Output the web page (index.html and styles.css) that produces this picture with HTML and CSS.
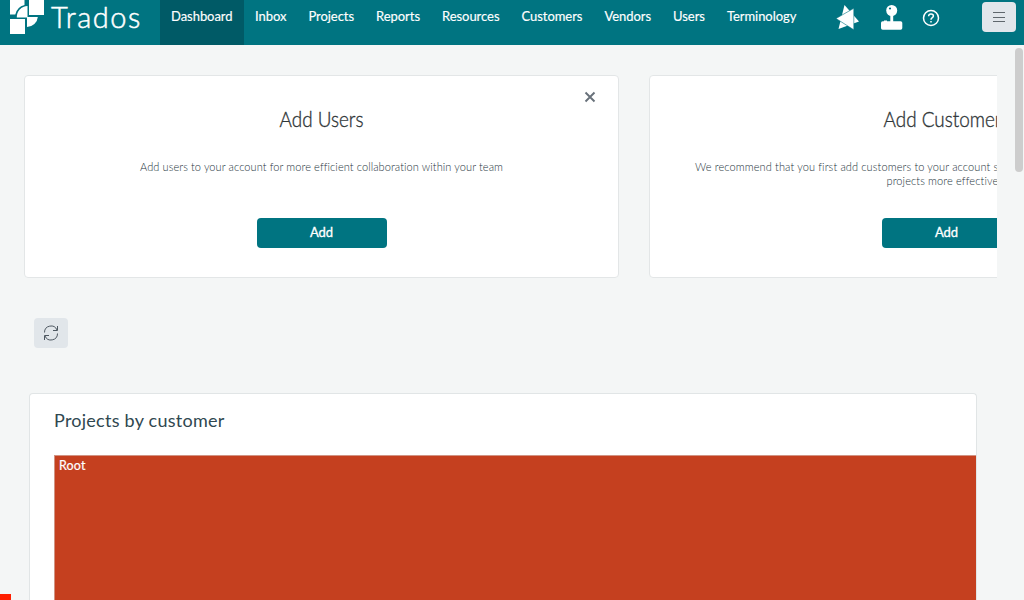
FILE: index.html
```html
<!DOCTYPE html>
<html lang="en">
<head>
<meta charset="utf-8">
<title>Trados</title>
<link rel="stylesheet" href="styles.css">
</head>
<body>
<header class="topbar">
  <div class="brand">
    <svg class="brand-mark" width="34" height="34" viewBox="0 0 34 34" fill="#fff">
      <path d="M0 0H14.500V5A12.500 12.500 0 0 0 5.300 14.500H0Z"/>
      <path d="M19 0H34V15H19Z"/>
      <path d="M17.500 6V17.500H6.800A11 11 0 0 1 17.500 6Z"/>
      <path d="M17 17H27.800A10.800 10.800 0 0 1 17 27Z"/>
      <path d="M0 19H15V34H0Z"/>
    </svg>
    <span class="brand-name">Trados</span>
  </div>
  <nav class="nav">
    <a class="nav-item active">Dashboard</a>
    <a class="nav-item">Inbox</a>
    <a class="nav-item">Projects</a>
    <a class="nav-item">Reports</a>
    <a class="nav-item">Resources</a>
    <a class="nav-item">Customers</a>
    <a class="nav-item">Vendors</a>
    <a class="nav-item">Users</a>
    <a class="nav-item">Terminology</a>
  </nav>
  <div class="tools">
    <svg width="24" height="26" viewBox="0 0 24 26" fill="#fff">
      <path d="M8.500 0L23 16.500L2.500 24Z"/>
      <path d="M0 13.500L17.800 3.300V24.800Z" stroke="#007481" stroke-width="0.600"/>
    </svg>
    <svg class="joystick" width="22" height="25" viewBox="0 0 22 25" fill="#fff">
      <circle cx="10.700" cy="5.500" r="5.500"/><circle cx="9" cy="3.500" r="1.100" fill="#007481"/>
      <path d="M9.300 10H12.200V17H9.300Z"/><path d="M3 15.500H6V17H3Z"/>
      <rect y="16.300" width="21.300" height="8.500" rx="1.700"/>
    </svg>
    <svg class="help" width="18" height="18" viewBox="0 0 18 18" fill="none" stroke="#fff" stroke-width="1.500">
      <circle cx="9" cy="9" r="7.500"/>
      <path d="M6.600 7.300Q6.700 5.100 9 5.100Q11.400 5.100 11.400 7Q11.400 8 10.100 8.800Q9 9.500 9 10.800"/>
      <path d="M9 12V13.500"/>
    </svg>
    <button class="menu" aria-label="Menu">
      <svg width="14" height="12" viewBox="0 0 14 12" stroke="#5f676d"><path d="M1 1.500H13M1 6.500H13M1 10.500H13"/></svg>
    </button>
  </div>
</header>
<main class="content">
  <section class="cards">
    <article class="card">
      <svg class="close" width="12" height="12" viewBox="0 0 12 12" stroke="#68717a" stroke-width="1.900"><path d="M1.500 1.500L10.500 10.500M10.500 1.500L1.500 10.500"/></svg>
      <h2 class="card-title">Add Users</h2>
      <p class="card-text">Add users to your account for more efficient collaboration within your team</p>
      <button class="add">Add</button>
    </article>
    <article class="card">
      <h2 class="card-title">Add Customers</h2>
      <p class="card-text">We recommend that you first add customers to your account so that you can organize and manage your<br>projects more effectively</p>
      <button class="add">Add</button>
    </article>
  </section>
  <button class="refresh" aria-label="Refresh">
    <svg width="16" height="16" viewBox="0 0 16 16" fill="none" stroke="#4e5861" stroke-width="1">
      <path d="M1.500 7.500A6.500 6.500 0 0 1 14 5M14.500 1V5.500H10M14.500 8.500A6.500 6.500 0 0 1 2 11M1.500 15V10.500H6"/>
    </svg>
  </button>
  <section class="panel">
    <h3 class="panel-title">Projects by customer</h3>
    <div class="treemap">Root</div>
  </section>
</main>
<div class="scroll-thumb"></div>
<div class="marker"></div>
</body>
</html>
```
FILE: styles.css
```css
* { box-sizing: border-box; }
html { height: 600px; overflow: hidden; }
body {
  margin: 0;
  width: 1024px;
  height: 600px;
  overflow: hidden;
  position: relative;
  background: #f4f6f6;
  font-family: Lato, "Liberation Sans", sans-serif;
}
button { border: 0; padding: 0; font-family: inherit; }
svg { display: block; flex: none; }
.topbar { display: flex; height: 45px; background: #007481; color: #fff; }
.brand { width: 160px; padding-left: 10px; display: flex; }
.brand-name {
  margin-left: 7px;
  font: 300 29px/33px Lato, sans-serif;
  letter-spacing: 1.5px;
  -webkit-text-stroke: 0.5px #fff;
}
.nav { display: flex; }
.nav-item {
  padding: 0 11px;
  font-size: 13px;
  line-height: 33px;
  letter-spacing: -0.045px;
  white-space: nowrap;
  -webkit-text-stroke: 0.15px #fff;
}
.nav-item.active { width: 84px; background: #005a66; }
.tools { margin-left: auto; padding: 2px 8px 0 0; display: flex; align-items: flex-start; }
.tools > svg:first-child { margin-top: 3px; }
.joystick { margin: 3px 0 0 21px; }
.help { margin: 7px 0 0 19px; }
.menu {
  width: 34px;
  height: 30px;
  margin-left: 42px;
  border-radius: 4px;
  background: #e1e6eb;
  display: flex;
  align-items: center;
  justify-content: center;
}
.content { height: 555px; overflow: hidden; padding: 30px 27px 0 24px; }
.cards { display: flex; gap: 30px; overflow: hidden; }
.card {
  position: relative;
  flex: 0 0 595px;
  height: 203px;
  padding-top: 30px;
  border: 1px solid #e3e6e7;
  border-radius: 4px;
  background: #fff;
  text-align: center;
}
.close { position: absolute; right: 22px; top: 15px; }
.card-title {
  margin: 0;
  font-size: 21px;
  line-height: 26px;
  font-weight: 300;
  color: #303638;
  transform: scaleX(0.9);
  -webkit-text-stroke: 0.35px #303638;
}
.card-text {
  height: 56px;
  margin: 28px 0 0;
  font-size: 11px;
  line-height: 14px;
  font-weight: 300;
  letter-spacing: 0.09px;
  font-variant-ligatures: common-ligatures;
  color: #25333c;
  white-space: nowrap;
}
.card + .card .card-text { letter-spacing: 0.12px; }
.add {
  display: block;
  width: 130px;
  height: 30px;
  margin: 2px auto 0;
  padding-bottom: 2px;
  border-radius: 4px;
  background: #007481;
  color: #fff;
  font-size: 13px;
  -webkit-text-stroke: 0.3px #fff;
}
.refresh {
  width: 34px;
  height: 30px;
  margin: 40px 0 0 10px;
  border-radius: 4px;
  background: #e1e6ea;
  display: flex;
  align-items: center;
  justify-content: center;
}
.panel {
  width: 948px;
  height: 207px;
  margin: 45px 0 0 5px;
  padding: 14px 0 0 24px;
  border: 1px solid #e1e5e6;
  border-bottom: 0;
  border-radius: 4px 4px 0 0;
  background: #fff;
}
.panel-title { margin: 0; font-size: 18px; line-height: 24px; font-weight: 400; letter-spacing: 0.25px; color: #304850; }
.treemap {
  height: 145px;
  margin-top: 23px;
  padding: 2px 4px;
  border: solid #d19383;
  border-width: 1px 0 0 1px;
  background: #c5401f;
  color: #fff;
  font-size: 12.5px;
  line-height: 15px;
  letter-spacing: 0.15px;
  -webkit-text-stroke: 0.2px #fff;
}
.scroll-thumb { position: absolute; left: 1015px; top: 48px; width: 8px; height: 124px; border-radius: 4px; background: #cdcdcd; }
.marker { position: absolute; left: 0; top: 594px; width: 11px; height: 6px; background: #ff1e00; }
```
